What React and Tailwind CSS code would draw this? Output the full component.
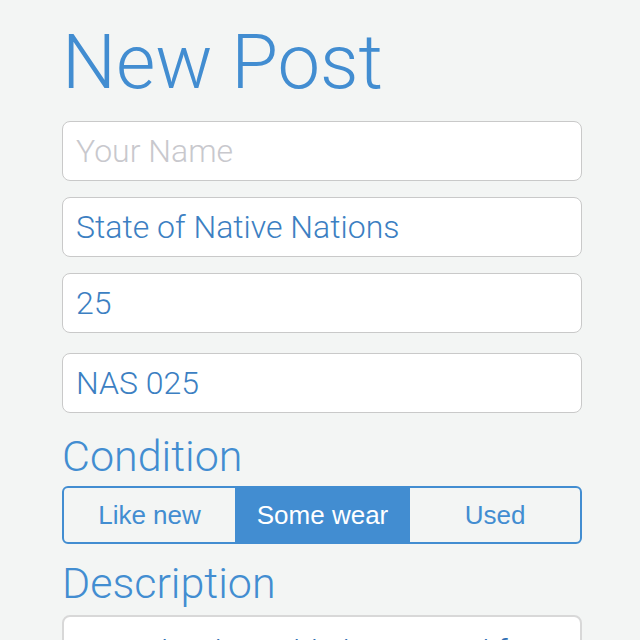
import React from 'react';

const font = { fontFamily: 'Roboto, "Liberation Sans", sans-serif' };
const helv = { fontFamily: '"Liberation Sans", Arial, sans-serif' };

const Field = ({ value, placeholder }) => (
  <input
    className="w-full h-[60px] rounded-lg border border-[#c9c9c9] bg-white px-[13px] text-[32px] font-light text-[#3c7fc2] placeholder:text-[#c8c8cd] outline-none"
    style={font}
    defaultValue={value}
    placeholder={placeholder}
  />
);

const options = [
  { label: 'Like new', w: 'w-[171px]' },
  { label: 'Some wear', w: 'w-[175px]' },
  { label: 'Used', w: 'flex-1' },
];

export default function App() {
  const selected = 'Some wear';
  return (
    <div className="h-[640px] overflow-hidden bg-[#f3f5f4]" style={font}>
      <div className="ml-[62px] w-[520px]">
        <h1 className="pt-[12px] text-[76px] leading-[100px] font-light text-[#428dd1]">New Post</h1>

        <div className="mt-[9px] flex flex-col gap-4">
          <Field placeholder="Your Name" />
          <Field value="State of Native Nations" />
          <Field value="25" />
        </div>
        <div className="mt-5">
          <Field value="NAS 025" />
        </div>

        <h2 className="mt-[18px] text-[43px] leading-[50px] font-light text-[#428dd1]">Condition</h2>
        <div className="mt-[5px] flex h-[58px] rounded-md border-2 border-[#428dd1] overflow-hidden" style={helv}>
          {options.map((o) => (
            <div
              key={o.label}
              className={
                o.label === selected
                  ? `${o.w} flex items-center justify-center bg-[#428dd1] text-white text-[26px]`
                  : `${o.w} flex items-center justify-center text-[#428dd1] text-[26px]`
              }
            >
              {o.label}
            </div>
          ))}
        </div>

        <h2 className="mt-[14px] text-[43px] leading-[50px] font-light text-[#428dd1]">Description</h2>
        <div className="mt-[7px] h-[160px] rounded-lg border-2 border-[#d8d8d8] bg-white px-[13px] pt-[10px] text-[32px] font-light text-[#2f6fb3]">
          Great book! Highlighting used for a few chapters.
        </div>
      </div>
    </div>
  );
}
